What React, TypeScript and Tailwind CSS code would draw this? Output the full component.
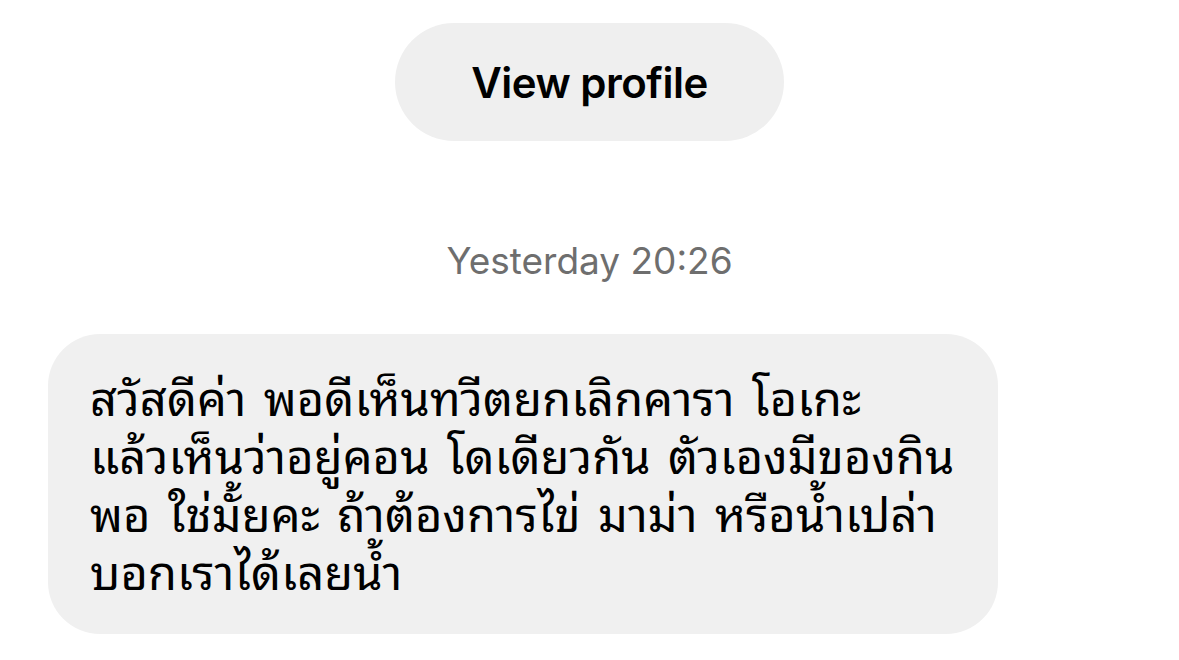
export default function App() {
  return (
    <div className="w-[1179px] h-[660px] bg-white overflow-hidden flex flex-col items-center font-['Inter',sans-serif]">
      <div className="mt-[23px] w-[389px] h-[118px] rounded-full bg-[#efefef] flex items-center justify-center">
        <span className="text-[42px] font-semibold text-black tracking-[-0.5px]">View profile</span>
      </div>
      <div className="mt-[101px] text-[37px] text-[#6e6e6e] leading-none">Yesterday 20:26</div>
      <div className="self-start ml-[48px] mt-[55px] w-[950px] h-[300px] rounded-[52px] bg-[#f0f0f0] pl-[42px] pt-[32px]">
        <p className="font-['Noto_Sans_Thai_Looped',sans-serif] text-[47px] leading-[58px] tracking-[0.1px] [word-spacing:5px] text-black">
          สวัสดีค่า พอดีเห็นทวีตยกเลิกคารา โอเกะ
          <br />
          แล้วเห็นว่าอยู่คอน โดเดียวกัน ตัวเองมีของกิน
          <br />
          พอ ใช่มั้ยคะ ถ้าต้องการไข่ มาม่า หรือน้ำเปล่า
          <br />
          บอกเราได้เลยน้ำ
        </p>
      </div>
    </div>
  );
}
